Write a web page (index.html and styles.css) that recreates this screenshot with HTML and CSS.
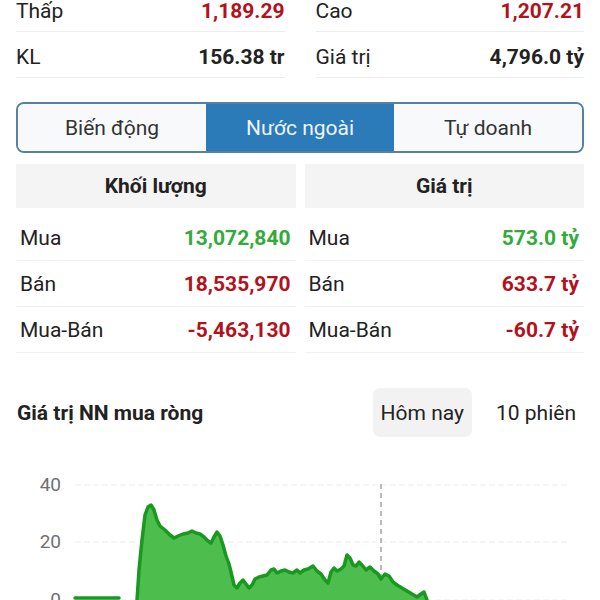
FILE: index.html
```html
<!DOCTYPE html>
<html lang="vi">
<head>
<meta charset="utf-8">
<title>Nước ngoài</title>
<link rel="stylesheet" href="styles.css">
</head>
<body>
<div class="page">
  <section class="stats">
    <div class="stat-row"><span>Thấp</span><b class="down">1,189.29</b></div>
    <div class="stat-row"><span>Cao</span><b class="down">1,207.21</b></div>
    <div class="stat-row"><span>KL</span><b>156.38 tr</b></div>
    <div class="stat-row"><span>Giá trị</span><b>4,796.0 tỷ</b></div>
  </section>

  <nav class="tabs">
    <div class="tab">Biến động</div>
    <div class="tab active">Nước ngoài</div>
    <div class="tab">Tự doanh</div>
  </nav>

  <section class="foreign">
    <div class="f-col">
      <div class="f-head">Khối lượng</div>
      <div class="f-row"><span>Mua</span><b class="up">13,072,840</b></div>
      <div class="f-row"><span>Bán</span><b class="down">18,535,970</b></div>
      <div class="f-row"><span>Mua-Bán</span><b class="down">-5,463,130</b></div>
    </div>
    <div class="f-col">
      <div class="f-head">Giá trị</div>
      <div class="f-row"><span>Mua</span><b class="up">573.0 tỷ</b></div>
      <div class="f-row"><span>Bán</span><b class="down">633.7 tỷ</b></div>
      <div class="f-row"><span>Mua-Bán</span><b class="down">-60.7 tỷ</b></div>
    </div>
  </section>

  <section class="chart-head">
    <h2 class="chart-title">Giá trị NN mua ròng</h2>
    <div class="range">
      <div class="range-btn selected">Hôm nay</div>
      <div class="range-btn">10 phiên</div>
    </div>
  </section>

  <svg class="chart" width="568" height="140" viewBox="16 470 568 140">
    <g class="grid">
      <line x1="75" y1="485" x2="567" y2="485"/>
      <line x1="75" y1="542" x2="567" y2="542"/>
      <line x1="75" y1="600" x2="567" y2="600"/>
    </g>
    <line class="cursor" x1="381" y1="484" x2="381" y2="610"/>
    <g class="axis">
      <text x="61" y="491">40</text>
      <text x="61" y="548">20</text>
      <text x="61" y="606">0</text>
    </g>
    <path class="area" d="M137,600 L139,570 L142,540 L145,515 L148,507 L151,505 L154,510 L157,520 L160,526 L165,530 L170,535 L174,538 L178,536 L183,534 L188,533 L192,531 L196,533 L200,534 L204,537 L208,541 L211,543 L214,537 L217,532 L220,536 L223,545 L226,556 L229,564 L231,572 L234,585 L237,588 L240,583 L243,580 L246,584 L249,588 L252,585 L255,579 L259,577 L263,576 L267,575 L271,570 L274,569 L277,573 L281,571 L285,570 L289,572 L293,573 L297,570 L300,573 L304,570 L308,569 L313,566 L317,571 L321,574 L325,580 L328,583 L331,572 L334,568 L337,571 L341,569 L344,566 L347,555 L350,558 L353,565 L356,566 L359,562 L362,565 L366,570 L370,567 L374,571 L378,574 L381,579 L385,574 L389,576 L393,582 L397,585 L402,588 L407,591 L412,594 L417,597 L421,594 L424,592 L427,600 Z"/>
    <path class="line" d="M137,600 L139,570 L142,540 L145,515 L148,507 L151,505 L154,510 L157,520 L160,526 L165,530 L170,535 L174,538 L178,536 L183,534 L188,533 L192,531 L196,533 L200,534 L204,537 L208,541 L211,543 L214,537 L217,532 L220,536 L223,545 L226,556 L229,564 L231,572 L234,585 L237,588 L240,583 L243,580 L246,584 L249,588 L252,585 L255,579 L259,577 L263,576 L267,575 L271,570 L274,569 L277,573 L281,571 L285,570 L289,572 L293,573 L297,570 L300,573 L304,570 L308,569 L313,566 L317,571 L321,574 L325,580 L328,583 L331,572 L334,568 L337,571 L341,569 L344,566 L347,555 L350,558 L353,565 L356,566 L359,562 L362,565 L366,570 L370,567 L374,571 L378,574 L381,579 L385,574 L389,576 L393,582 L397,585 L402,588 L407,591 L412,594 L417,597 L421,594 L424,592 L427,600"/>
    <path class="line" d="M75,598 L119,598"/>
  </svg>
</div>
</body>
</html>
```
FILE: styles.css
```css
* { box-sizing: border-box; }

body {
  margin: 0;
  background: #ffffff;
  color: #222222;
  font-family: Roboto, "Noto Sans", "Liberation Sans", sans-serif;
  font-size: 21px;
  overflow: hidden;
}

.page {
  padding: 0 16px;
  margin-top: -14px;
}

b { font-weight: 700; }

.up { color: #33aa3a; }
.down { color: #b3121c; }

/* top stats */
.stats {
  display: grid;
  grid-template-columns: 1fr 1fr;
  column-gap: 31px;
}

.stat-row {
  height: 46px;
  padding-top: 5px;
  display: flex;
  align-items: center;
  justify-content: space-between;
  border-bottom: 1px solid #ededed;
}

/* tabs */
.tabs {
  margin-top: 24px;
  height: 51px;
  display: flex;
  border: 2px solid #5a819c;
  border-radius: 8px;
  overflow: hidden;
}

.tab {
  flex: 1;
  display: flex;
  align-items: center;
  justify-content: center;
  background: #f7f9fa;
  color: #333333;
}

.tab.active {
  background: #2b7bb8;
  color: #eef4fa;
}

/* foreign table */
.foreign {
  margin-top: 11px;
  display: grid;
  grid-template-columns: 1fr 1fr;
  column-gap: 9px;
}

.f-head {
  height: 44px;
  margin-bottom: 7px;
  display: flex;
  align-items: center;
  justify-content: center;
  background: #f4f4f4;
  font-weight: 700;
}

.f-row {
  height: 46px;
  padding: 0 5px 0 4px;
  display: flex;
  align-items: center;
  justify-content: space-between;
  border-bottom: 1px solid #f1f1f1;
}

/* chart header */
.chart-head {
  margin-top: 35px;
  height: 49px;
  display: flex;
  align-items: center;
  justify-content: space-between;
}

.chart-title {
  margin: 0 0 0 1px;
  font-size: 21px;
  font-weight: 700;
}

.range {
  display: flex;
  gap: 16px;
}

.range-btn {
  height: 49px;
  padding: 0 8px;
  display: flex;
  align-items: center;
  border-radius: 7px;
  color: #222222;
}

.range-btn.selected {
  background: #f2f2f2;
}

/* chart */
.chart {
  display: block;
  margin-top: 33px;
  overflow: hidden;
}

.grid line {
  stroke: #ececec;
  stroke-width: 1;
  stroke-dasharray: 6 3;
}

.cursor {
  stroke: #b9b9b9;
  stroke-width: 2;
  stroke-dasharray: 5 4;
}

.axis text {
  fill: #707070;
  font-size: 19px;
  text-anchor: end;
  font-family: Roboto, "Noto Sans", sans-serif;
}

.area {
  fill: #4dbd4d;
}

.line {
  fill: none;
  stroke: #19991f;
  stroke-width: 3.5;
  stroke-linejoin: round;
  stroke-linecap: round;
}
```
